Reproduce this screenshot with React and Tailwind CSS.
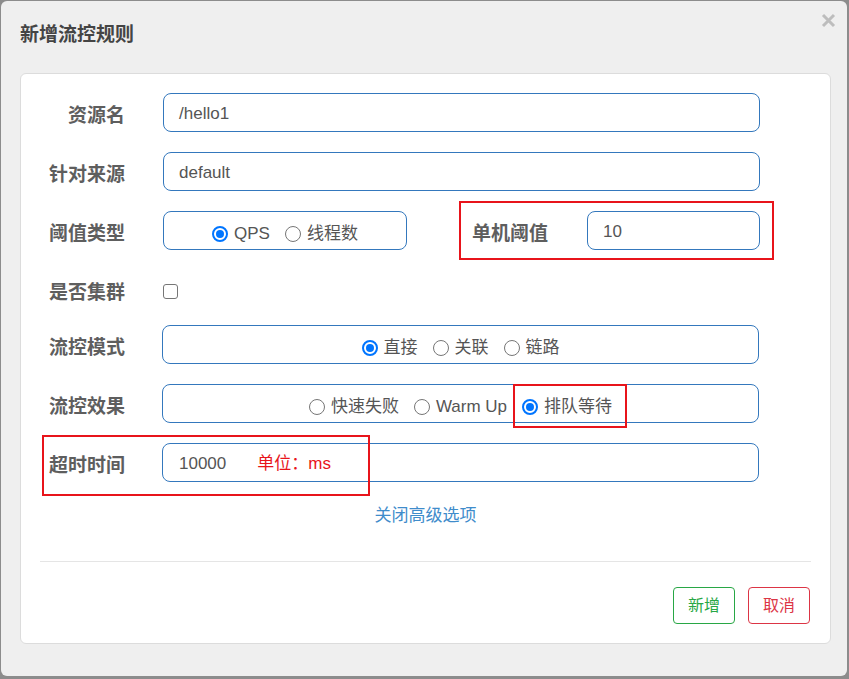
import React from "react";

const font = "font-['Liberation_Sans','Noto_Sans_CJK_SC',sans-serif]";

const Radio = ({ checked, label }) => (
  <span className="flex items-center gap-[6px]">
    {checked ? (
      <span className="w-4 h-4 rounded-full border-2 border-[#0075ff] flex items-center justify-center">
        <span className="w-2 h-2 rounded-full bg-[#0075ff]"></span>
      </span>
    ) : (
      <span className="w-4 h-4 rounded-full border border-[#767676]"></span>
    )}
    <span className="leading-[24px]">{label}</span>
  </span>
);

const Label = ({ children, className = "" }) => (
  <div className={`w-[104px] shrink-0 text-right text-[19px] font-bold text-[#5e5e5e] ${className}`}>{children}</div>
);

const boxCls = "h-[39px] border border-[#3478bd] rounded-[8px] flex items-center text-[17px] text-[#555]";

export default function App() {
  return (
    <div className={`h-[679px] w-[849px] bg-[#8c8c8c] pt-px pl-px overflow-hidden ${font}`}>
      <div className="relative w-[846px] h-[675px] bg-[#efefef] rounded-md">
        <svg className="absolute left-[820px] top-[12px]" width="15" height="15" viewBox="0 0 15 15">
          <path d="M2 2 L13 13 M13 2 L2 13" stroke="#bdbdbd" strokeWidth="3" />
        </svg>
        <div className="pl-[19px] pt-[22px] leading-[24px] text-[19px] font-bold text-[#444]">新增流控规则</div>

        <div className="mx-[19px] mt-[26px] w-[811px] bg-white border border-[#dcdcdc] rounded-[6px] pt-[19px] pb-[19px]">
          {/* 资源名 */}
          <div className="flex items-center">
            <Label className="pt-[8px]">资源名</Label>
            <div className={`${boxCls} ml-[38px] w-[597px] pl-[15px] pt-[3px]`}>/hello1</div>
          </div>

          {/* 针对来源 */}
          <div className="flex items-center mt-5">
            <Label className="pt-[8px]">针对来源</Label>
            <div className={`${boxCls} ml-[38px] w-[597px] pl-[15px] pt-[3px]`}>default</div>
          </div>

          {/* 阈值类型 + 单机阈值 */}
          <div className="flex items-center mt-5 h-[39px]">
            <Label className="pt-[8px]">阈值类型</Label>
            <div className={`${boxCls} ml-[38px] w-[244px] justify-center gap-[15px] pt-[7px]`}>
              <Radio checked label="QPS" />
              <Radio label="线程数" />
            </div>
            <div className="ml-[52px] -my-[10px] border-2 border-[#e8141b] py-[8px] pl-[11px] pr-[12px] flex items-center">
              <div className="w-[115px] pt-[8px] text-[19px] font-bold text-[#5e5e5e]">单机阈值</div>
              <div className={`${boxCls} w-[173px] pl-[15px] pt-[3px]`}>10</div>
            </div>
          </div>

          {/* 是否集群 */}
          <div className="flex items-center mt-5 h-[35px] pt-[7px]">
            <Label className="pt-[4px]">是否集群</Label>
            <span className="ml-[38px] w-[15px] h-[15px] border border-[#767676] rounded-[3px]"></span>
          </div>

          {/* 流控模式 */}
          <div className="flex items-center mt-5">
            <Label className="pt-[8px]">流控模式</Label>
            <div className={`${boxCls} ml-[37px] w-[597px] justify-center gap-[15px] pt-[7px]`}>
              <Radio checked label="直接" />
              <Radio label="关联" />
              <Radio label="链路" />
            </div>
          </div>

          {/* 流控效果 */}
          <div className="flex items-center mt-5">
            <Label className="pt-[8px]">流控效果</Label>
            <div className={`${boxCls} ml-[37px] w-[597px] justify-center gap-[15px] pt-[7px]`}>
              <Radio label="快速失败" />
              <Radio label="Warm Up" />
              <span className="relative">
                <Radio checked label="排队等待" />
                <span className="absolute -left-[9px] -right-[15px] -top-[11px] -bottom-[9px] border-2 border-[#e8141b]"></span>
              </span>
            </div>
          </div>

          {/* 超时时间 */}
          <div className="relative flex items-center mt-5">
            <Label className="pt-[8px]">超时时间</Label>
            <div className={`${boxCls} ml-[37px] w-[597px] pl-[16px] pt-[3px]`}>
              <span>10000</span>
              <span className="ml-[31px] text-[#e8141b]">单位：ms</span>
            </div>
            <span className="absolute left-[21px] -top-[8px] w-[328px] h-[61px] border-2 border-[#e8141b]"></span>
          </div>

          <div className="mt-[22px] leading-[24px] text-center text-[17px] text-[#3f8ccb]">关闭高级选项</div>

          <div className="mx-[19px] mt-[33px] h-px bg-[#e5e5e5]"></div>

          <div className="flex justify-end gap-[13px] pr-[20px] mt-[25px]">
            <button className="w-[62px] h-[37px] border border-[#28a745] rounded-[4px] text-[16px] text-[#28a745]">新增</button>
            <button className="w-[62px] h-[37px] border border-[#dc3545] rounded-[4px] text-[16px] text-[#dc3545]">取消</button>
          </div>
        </div>
      </div>
    </div>
  );
}
